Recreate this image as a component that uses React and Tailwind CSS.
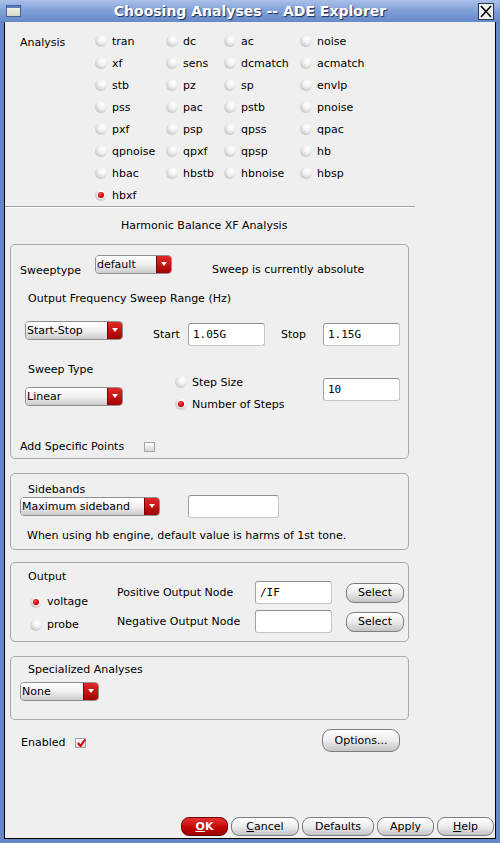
import React from 'react';

const analyses = [
  ['tran', 'dc', 'ac', 'noise'],
  ['xf', 'sens', 'dcmatch', 'acmatch'],
  ['stb', 'pz', 'sp', 'envlp'],
  ['pss', 'pac', 'pstb', 'pnoise'],
  ['pxf', 'psp', 'qpss', 'qpac'],
  ['qpnoise', 'qpxf', 'qpsp', 'hb'],
  ['hbac', 'hbstb', 'hbnoise', 'hbsp'],
  ['hbxf'],
];

const Radio = ({ on }) => (
  <span className="flex h-[12px] w-[12px] shrink-0 items-center justify-center rounded-full bg-[radial-gradient(circle_at_62%_32%,#ffffff_0%,#f2f2f2_35%,#cfcfcf_70%,#8c8c8c_100%)]">
    {on && (
      <span className="h-[6px] w-[6px] rounded-full bg-[radial-gradient(circle_at_40%_35%,#ff5050_0%,#d80000_55%,#8a0000_100%)]" />
    )}
  </span>
);

const Check = ({ on }) => (
  <span className="relative flex h-[10px] w-[11px] shrink-0 items-center justify-center border border-[#a6a6a6] bg-linear-to-b from-[#ffffff] to-[#d4d4d4]">
    {on && (
      <svg width="9" height="8" viewBox="0 0 9 8" className="absolute left-[1px] top-0">
        <path d="M1 4 L3.5 7 L8 0.5" fill="none" stroke="#d40000" strokeWidth="2" />
      </svg>
    )}
  </span>
);

const Combo = ({ label, className }) => (
  <div className={`flex h-[19px] shrink-0 overflow-hidden rounded-[4px] border border-[#8f8f8f] ${className}`}>
    <div className="flex flex-1 items-center bg-linear-to-b from-[#ffffff] via-[#f0f0f0] to-[#cbcbcb] pl-[1px] leading-[14px]">
      {label}
    </div>
    <div className="flex w-[15px] items-start justify-center border-l border-[#7a0000] bg-linear-to-b from-[#e22828] to-[#a00000] pt-[6px]">
      <span className="h-0 w-0 border-x-[3px] border-t-[4px] border-x-transparent border-t-white" />
    </div>
  </div>
);

const Field = ({ value, className }) => (
  <div className={`flex h-[23px] shrink-0 items-center rounded-[3px] border border-[#c6c6c6] border-l-[#a2a2a2] border-t-[#8c8c8c] bg-white pl-[4px] font-['DejaVu_Sans_Mono',monospace] text-[11px] ${className}`}>
    {value}
  </div>
);

const Btn = ({ children, className }) => (
  <div className={`flex shrink-0 items-center justify-center rounded-[8px] border border-[#7d7d7d] bg-linear-to-b from-[#ffffff] via-[#ececec] to-[#c4c4c4] leading-[14px] ${className}`}>
    {children}
  </div>
);

const Panel = ({ className, children }) => (
  <div className={`ml-[5px] flex w-[399px] flex-col rounded-[5px] border border-[#a9a9a9] ${className}`}>
    {children}
  </div>
);

export default function App() {
  return (
    <div className="flex h-[843px] w-[500px] flex-col bg-[#6487c6] font-['DejaVu_Sans',sans-serif] text-[11px] leading-[14px] text-black">
      {/* title bar */}
      <div className="relative flex h-[22px] shrink-0 items-center justify-center bg-linear-to-b from-[#a9c0e8] via-[#809fd8] to-[#6689c8]">
        <div className="absolute left-[6px] top-[5px] flex h-[12px] w-[15px] flex-col border border-[#46608f]">
          <div className="h-[2px] bg-[#5b7cc0]" />
          <div className="flex-1 bg-linear-to-b from-[#f4f2e8] to-[#d6d6cc]" />
        </div>
        <span className="text-[14px] font-bold text-white [text-shadow:1px_1px_1px_#1c2d57]">
          Choosing Analyses -- ADE Explorer
        </span>
        <div className="absolute right-[6px] top-[3px] flex h-[17px] w-[16px] items-center justify-center border border-[#2a3550] bg-[#eef0f6]">
          <svg width="12" height="13" viewBox="0 0 12 13">
            <path d="M1 1 L11 12 M11 1 L1 12" stroke="#000" strokeWidth="1.6" />
          </svg>
        </div>
      </div>

      {/* body */}
      <div className="mx-[4px] mb-[4px] flex flex-1 flex-col border-x border-b border-black bg-[#efefef]">
        <div className="flex w-[410px] flex-col">
          {/* analysis radios */}
          <div className="flex pt-[8px]">
            <div className="w-[90px] shrink-0 pl-[15px] pt-[6px]">Analysis</div>
            <div className="grid grid-cols-[71px_58px_76px_1fr]">
              {analyses.map((row) =>
                row.map((name) => (
                  <div key={name} className="flex h-[22px] items-center gap-[5px]">
                    <Radio on={name === 'hbxf'} />
                    <span className="pt-[1px]">{name}</span>
                  </div>
                ))
              )}
            </div>
          </div>

          <div className="h-px bg-[#a2a2a2]" />
          <div className="h-px bg-white" />

          <div className="mt-[11px] pl-[116px]">Harmonic Balance XF Analysis</div>

          {/* sweep panel */}
          <Panel className="mt-[11px] h-[215px]">
            <div className="mt-[10px] flex items-start pl-[9px]">
              <div className="mt-[9px] w-[75px]">Sweeptype</div>
              <Combo label="default" className="w-[77px]" />
              <div className="ml-[40px] mt-[8px]">Sweep is currently absolute</div>
            </div>
            <div className="mt-[14px] pl-[17px]">Output Frequency Sweep Range (Hz)</div>
            <div className="mt-[15px] flex items-start pl-[14px]">
              <Combo label="Start-Stop" className="w-[98px]" />
              <div className="ml-[30px] mt-[7px] w-[35px]">Start</div>
              <Field value="1.05G" className="mt-[2px] w-[77px]" />
              <div className="ml-[16px] mt-[7px] w-[42px]">Stop</div>
              <Field value="1.15G" className="mt-[2px] w-[77px]" />
            </div>
            <div className="mt-[17px] flex items-start pl-[14px]">
              <div className="flex w-[98px] flex-col">
                <div className="pl-[3px]">Sweep Type</div>
                <Combo label="Linear" className="mt-[10px] w-[98px]" />
              </div>
              <div className="ml-[52px] flex w-[148px] flex-col pt-[8px]">
                <div className="flex h-[22px] items-center gap-[5px]">
                  <Radio />
                  <span className="pt-[1px]">Step Size</span>
                </div>
                <div className="flex h-[22px] items-center gap-[5px]">
                  <Radio on />
                  <span className="pt-[1px]">Number of Steps</span>
                </div>
              </div>
              <Field value="10" className="mt-[15px] w-[77px]" />
            </div>
            <div className="mt-[25px] flex items-center pl-[9px]">
              <div className="w-[124px]">Add Specific Points</div>
              <Check />
            </div>
          </Panel>

          {/* sidebands panel */}
          <Panel className="mt-[14px] h-[77px]">
            <div className="mt-[9px] pl-[17px]">Sidebands</div>
            <div className="flex h-[19px] items-center pl-[9px]">
              <Combo label="Maximum sideband" className="w-[140px]" />
              <Field value="" className="ml-[28px] w-[91px]" />
            </div>
            <div className="mt-[13px] pl-[16px]">When using hb engine, default value is harms of 1st tone.</div>
          </Panel>

          {/* output panel */}
          <Panel className="mt-[12px] h-[80px]">
            <div className="flex">
              <div className="flex w-[106px] flex-col">
                <div className="mt-[7px] pl-[17px]">Output</div>
                <div className="mt-[6px] flex flex-col pl-[19px]">
                  <div className="flex h-[23px] items-center gap-[5px]">
                    <Radio on />
                    <span className="pt-[1px]">voltage</span>
                  </div>
                  <div className="flex h-[23px] items-center gap-[5px]">
                    <Radio />
                    <span className="pt-[1px]">probe</span>
                  </div>
                </div>
              </div>
              <div className="mt-[18px] flex flex-col gap-[6px]">
                <div className="flex h-[23px] items-center">
                  <div className="w-[138px]">Positive Output Node</div>
                  <Field value="/IF" className="w-[77px]" />
                  <Btn className="ml-[14px] h-[20px] w-[58px]">Select</Btn>
                </div>
                <div className="flex h-[23px] items-center">
                  <div className="w-[138px]">Negative Output Node</div>
                  <Field value="" className="w-[77px]" />
                  <Btn className="ml-[14px] h-[20px] w-[58px]">Select</Btn>
                </div>
              </div>
            </div>
          </Panel>

          {/* specialized panel */}
          <Panel className="mt-[14px] h-[64px]">
            <div className="mt-[6px] pl-[17px]">Specialized Analyses</div>
            <Combo label="None" className="ml-[9px] mt-[5px] w-[79px]" />
          </Panel>

          <div className="mt-[9px] flex h-[23px] items-center justify-between pl-[16px] pr-[15px]">
            <div className="flex items-center pt-[4px]">
              <div className="w-[54px] pt-[1px]">Enabled</div>
              <Check on />
            </div>
            <Btn className="h-[23px] w-[78px] rounded-[9px]">Options...</Btn>
          </div>
        </div>

        <div className="flex-1" />

        {/* bottom buttons */}
        <div className="flex justify-end gap-[3px] pb-[2px] pr-[1px]">
          <div className="flex h-[19px] w-[47px] items-center justify-center rounded-[8px] border border-[#6a0000] bg-linear-to-b from-[#e43030] via-[#c80808] to-[#9a0000] font-bold text-white">
            <span><span className="underline">O</span>K</span>
          </div>
          <Btn className="h-[19px] w-[68px]">
            <span><span className="underline">C</span>ancel</span>
          </Btn>
          <Btn className="h-[19px] w-[72px]">Defaults</Btn>
          <Btn className="h-[19px] w-[57px]">Apply</Btn>
          <Btn className="h-[19px] w-[57px]">
            <span><span className="underline">H</span>elp</span>
          </Btn>
        </div>
      </div>
    </div>
  );
}
